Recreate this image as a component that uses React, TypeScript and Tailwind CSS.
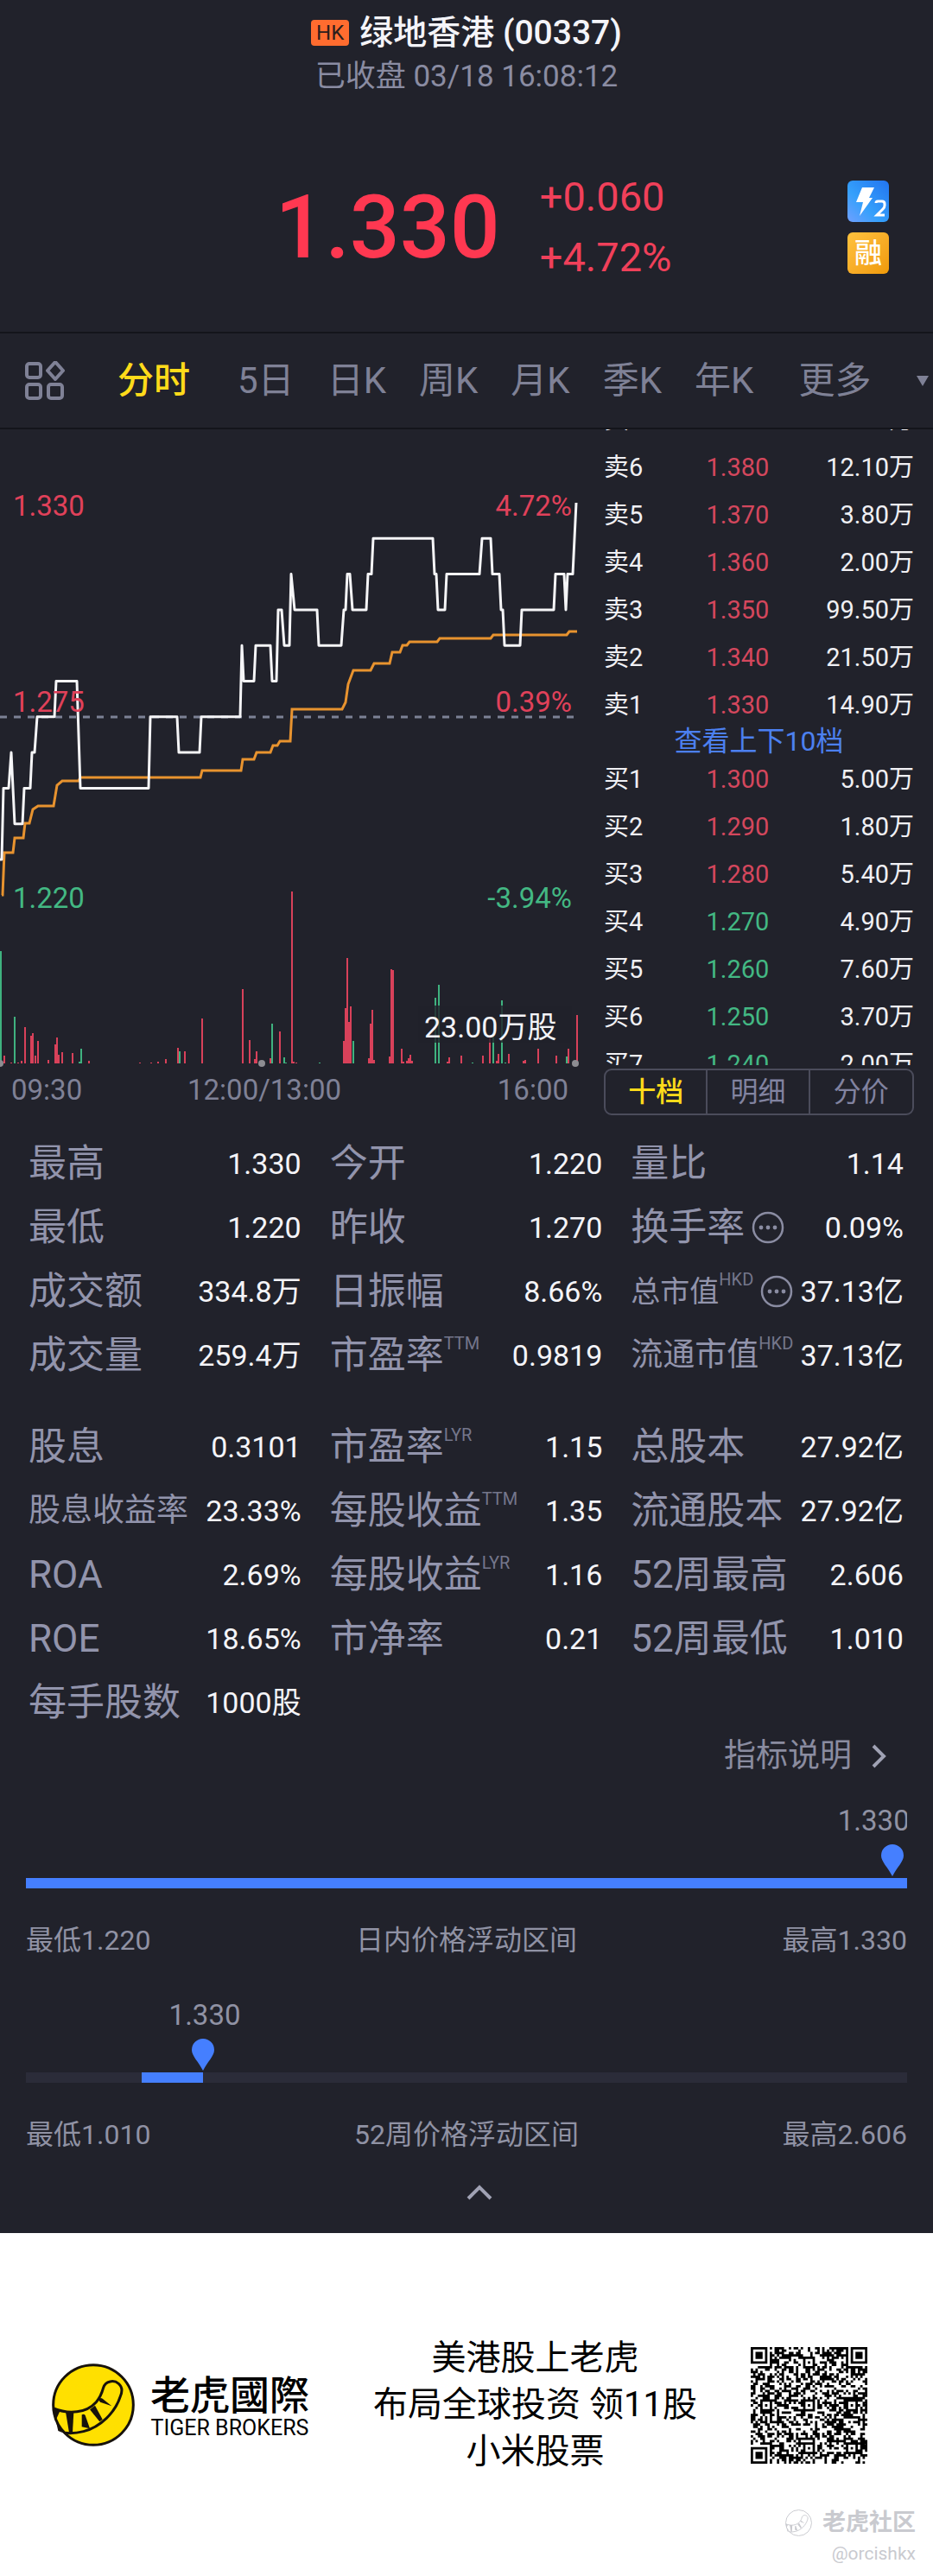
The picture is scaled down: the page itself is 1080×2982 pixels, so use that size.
import type { ReactNode } from 'react';

type Stat = {
  label: string;
  value: string;
  sup?: string;
  info?: boolean;
  size?: string;
};

const periods = [
  { label: '分时', className: 'text-[#ffdb1a] font-medium' },
  { label: '5日', className: 'ml-[55px] text-[#7f8196]' },
  { label: '日K', className: 'ml-[38px] text-[#7f8196]' },
  { label: '周K', className: 'ml-[38px] text-[#7f8196]' },
  { label: '月K', className: 'ml-[38px] text-[#7f8196]' },
  { label: '季K', className: 'ml-[38px] text-[#7f8196]' },
  { label: '年K', className: 'ml-[38px] text-[#7f8196]' },
  { label: '更多', className: 'ml-[52px] text-[#7f8196]' },
];

// [x, price]
const priceLine = [
  [0, 1.23], [2, 1.23], [4, 1.25], [10, 1.25], [13, 1.26], [17, 1.24], [26, 1.24], [28, 1.25],
  [35, 1.25], [37, 1.26], [40, 1.26], [43, 1.27], [63, 1.27], [65, 1.28], [89, 1.28], [93, 1.25],
  [172, 1.25], [174, 1.27], [205, 1.27], [207, 1.26], [231, 1.26], [233, 1.27], [278, 1.27],
  [280, 1.29], [282, 1.28], [294, 1.28], [296, 1.29], [313, 1.29], [315, 1.28], [320, 1.28],
  [322, 1.3], [326, 1.3], [329, 1.29], [335, 1.29], [337, 1.31], [341, 1.3], [367, 1.3],
  [369, 1.29], [395, 1.29], [398, 1.3], [400, 1.3], [402, 1.31], [405, 1.31], [408, 1.3],
  [424, 1.3], [426, 1.31], [430, 1.31], [432, 1.32], [501, 1.32], [503, 1.31], [505, 1.31],
  [507, 1.3], [515, 1.3], [517, 1.31], [555, 1.31], [558, 1.32], [568, 1.32], [570, 1.31],
  [578, 1.31], [580, 1.3], [582, 1.3], [584, 1.29], [602, 1.29], [604, 1.3], [641, 1.3],
  [643, 1.31], [653, 1.31], [655, 1.3], [657, 1.31], [663, 1.31], [665, 1.32], [667, 1.33],
];

// [x, y]
const averageLine = [
  [2, 539], [3, 539], [5, 490], [15, 490], [17, 473], [27, 473], [29, 456], [34, 456], [38, 440],
  [44, 436], [62, 436], [66, 412], [72, 407], [91, 407], [93, 403], [232, 403], [234, 395],
  [279, 395], [281, 382], [294, 382], [297, 374], [313, 374], [316, 366], [321, 366], [324, 361],
  [336, 361], [338, 324], [396, 324], [400, 316], [403, 295], [409, 279], [429, 279], [433, 271],
  [451, 271], [454, 258], [463, 258], [466, 250], [471, 250], [474, 246], [506, 246], [509, 242],
  [568, 242], [571, 238], [656, 238], [659, 234], [668, 234],
];

const riseVolumes = [
  [5, 9], [13, 1], [21, 1], [25, 3], [29, 42], [36, 32], [38, 35], [41, 9], [44, 26], [56, 4],
  [64, 22], [66, 30], [68, 10], [72, 13], [84, 12], [103, 3], [162, 1], [175, 1], [183, 2],
  [192, 5], [206, 18], [214, 14], [234, 52], [281, 86], [289, 27], [295, 5], [297, 14], [313, 6],
  [324, 37], [338, 199], [340, 2], [343, 1], [398, 26], [400, 64], [402, 122], [404, 48],
  [406, 66], [427, 6], [429, 46], [431, 62], [433, 4], [451, 8], [453, 109], [455, 108],
  [465, 17], [467, 2], [471, 3], [473, 6], [475, 10], [477, 3], [518, 2], [520, 7], [534, 9],
  [559, 9], [567, 31], [575, 3], [577, 11], [589, 11], [606, 3], [608, 4], [623, 17], [644, 9],
  [658, 17], [668, 56],
];

const fallVolumes = [
  [1, 130], [17, 54], [92, 2], [94, 17], [208, 14], [315, 46], [329, 7], [331, 1], [370, 1],
  [409, 26], [504, 76], [508, 91], [547, 1], [571, 31], [581, 73], [585, 1], [656, 8],
];

const asks = [
  ['卖7', '1.390', '6.20万'],
  ['卖6', '1.380', '12.10万'],
  ['卖5', '1.370', '3.80万'],
  ['卖4', '1.360', '2.00万'],
  ['卖3', '1.350', '99.50万'],
  ['卖2', '1.340', '21.50万'],
  ['卖1', '1.330', '14.90万'],
];

const bids = [
  ['买1', '1.300', '5.00万'],
  ['买2', '1.290', '1.80万'],
  ['买3', '1.280', '5.40万'],
  ['买4', '1.270', '4.90万'],
  ['买5', '1.260', '7.60万'],
  ['买6', '1.250', '3.70万'],
  ['买7', '1.240', '2.00万'],
];

const tradingStats: Stat[] = [
  { label: '最高', value: '1.330' },
  { label: '今开', value: '1.220' },
  { label: '量比', value: '1.14' },
  { label: '最低', value: '1.220' },
  { label: '昨收', value: '1.270' },
  { label: '换手率', value: '0.09%', info: true },
  { label: '成交额', value: '334.8万' },
  { label: '日振幅', value: '8.66%' },
  { label: '总市值', value: '37.13亿', sup: 'HKD', info: true, size: 'text-[34px]' },
  { label: '成交量', value: '259.4万' },
  { label: '市盈率', value: '0.9819', sup: 'TTM' },
  { label: '流通市值', value: '37.13亿', sup: 'HKD', size: 'text-[37px]' },
];

const companyStats: Stat[] = [
  { label: '股息', value: '0.3101' },
  { label: '市盈率', value: '1.15', sup: 'LYR' },
  { label: '总股本', value: '27.92亿' },
  { label: '股息收益率', value: '23.33%', size: 'text-[37px]' },
  { label: '每股收益', value: '1.35', sup: 'TTM' },
  { label: '流通股本', value: '27.92亿' },
  { label: 'ROA', value: '2.69%' },
  { label: '每股收益', value: '1.16', sup: 'LYR' },
  { label: '52周最高', value: '2.606' },
  { label: 'ROE', value: '18.65%' },
  { label: '市净率', value: '0.21' },
  { label: '52周最低', value: '1.010' },
  { label: '每手股数', value: '1000股' },
];

const ranges = [
  {
    title: '日内价格浮动区间',
    low: '最低1.220',
    high: '最高1.330',
    from: 0,
    to: 100,
    pinAt: 98.3,
    labelAt: 96.2,
  },
  {
    title: '52周价格浮动区间',
    low: '最低1.010',
    high: '最高2.606',
    from: 13.1,
    to: 20.1,
    pinAt: 20.1,
    labelAt: 20.3,
  },
];

function toPoints(points: number[][]) {
  return points.map(([x, y]) => `${x},${y}`).join(' ');
}

function priceToY(price: number) {
  return 85 + (1.33 - price) * 4130;
}

function volumePath(bars: number[][]) {
  return bars.map(([x, height]) => `M${x} 734v${-height}`).join('');
}

const QR_SIZE = 49;

function isFinder(row: number, col: number) {
  const corners = [
    [0, 0],
    [0, QR_SIZE - 7],
    [QR_SIZE - 7, 0],
  ];
  for (const [top, left] of corners) {
    const r = row - top;
    const c = col - left;
    if (r >= -1 && r <= 7 && c >= -1 && c <= 7) {
      const ring = Math.max(Math.abs(r - 3), Math.abs(c - 3));
      return ring === 3 || ring <= 1;
    }
  }
  return null;
}

function isAlignment(row: number, col: number) {
  for (const top of [6, 24, 42]) {
    for (const left of [6, 24, 42]) {
      const ring = Math.max(Math.abs(row - top), Math.abs(col - left));
      if (ring <= 2) return ring !== 1;
    }
  }
  return null;
}

function qrPath() {
  let seed = 20337;
  let path = '';
  for (let row = 0; row < QR_SIZE; row++) {
    for (let col = 0; col < QR_SIZE; col++) {
      seed = (seed * 1103515245 + 12345) % 2147483648;
      const dark = isFinder(row, col) ?? isAlignment(row, col) ?? seed / 2147483648 < 0.5;
      if (dark) path += `M${col} ${row}h1v1h-1z`;
    }
  }
  return path;
}

function Header() {
  return (
    <header className="border-b-2 border-[#14151b] pt-3.5 pb-[71px]">
      <div className="flex items-center justify-center gap-3 leading-[48px]">
        <span className="rounded bg-[#ff6c2f] px-1.5 text-[24px] leading-[30px] text-[#2a1d1c]">
          HK
        </span>
        <h1 className="text-[39px] font-medium text-[#f4f4f8]">绿地香港 (00337)</h1>
      </div>
      <p className="mt-[7px] text-center text-[35px] leading-10 text-[#8a8ca2]">
        已收盘 03/18 16:08:12
      </p>
      <div className="mt-[84px] grid h-[120px] grid-cols-[1fr_auto_1fr] items-center pl-4">
        <span />
        <div className="flex items-center gap-[46px]">
          <strong className="text-[102px] leading-[120px] font-medium text-[#ff3851]">1.330</strong>
          <div className="text-[47px] leading-[70px] text-[#f0405a]">
            <p>+0.060</p>
            <p>+4.72%</p>
          </div>
        </div>
        <div className="mr-[51px] flex flex-col items-end gap-3">
          <LevelTwoBadge />
          <span className="flex size-12 items-center justify-center rounded-md bg-linear-to-br from-[#ffc23d] to-[#f09a05] text-[32px] leading-none font-medium text-white">
            融
          </span>
        </div>
      </div>
    </header>
  );
}

function LevelTwoBadge() {
  return (
    <svg viewBox="0 0 48 48" className="size-12" role="img" aria-label="Level 2">
      <defs>
        <linearGradient id="badge" x1="0" y1="1" x2="1" y2="0">
          <stop offset="0" stopColor="#6fa0ff" />
          <stop offset="0.4" stopColor="#35a0fb" />
          <stop offset="1" stopColor="#2274f0" />
        </linearGradient>
      </defs>
      <rect width="48" height="48" rx="6" fill="url(#badge)" />
      <path d="M17 8h14l-6 12h4L14 41l4-16h-8z" fill="#fff" />
      <path
        d="M33 26q0-2 2-2h5q3 0 3 3v2q0 2-2 4l-7 7h9"
        fill="none"
        stroke="#fff"
        strokeWidth="3"
      />
    </svg>
  );
}

function PeriodTabs() {
  return (
    <nav className="flex h-[111px] items-center border-b-2 border-[#14151b] pl-[29px] text-[42px] leading-[60px]">
      <button type="button" aria-label="布局" className="mr-[61px]">
        <svg
          viewBox="0 0 46 46"
          className="size-[46px]"
          fill="none"
          stroke="#7f8196"
          strokeWidth="4"
          strokeLinejoin="round"
        >
          <rect x="2" y="3" width="16" height="16" rx="3" />
          <rect x="2" y="27" width="16" height="16" rx="3" />
          <rect x="27" y="27" width="16" height="16" rx="3" />
          <path d="M35 1l9 10-9 10-9-10z" />
        </svg>
      </button>
      {periods.map((period) => (
        <button key={period.label} type="button" className={period.className}>
          {period.label}
        </button>
      ))}
      <svg viewBox="0 0 16 14" className="mr-1 ml-auto h-3.5 w-4" fill="#7f8196">
        <path d="M1 1h14L8 13z" />
      </svg>
    </nav>
  );
}

function IntradayChart() {
  return (
    <svg viewBox="0 0 680 800" className="w-full" role="img" aria-label="分时走势">
      <path d="M0 333H668" stroke="#7c8195" strokeWidth="3" strokeDasharray="8 8" />
      <path d={volumePath(riseVolumes)} stroke="#d8415a" strokeWidth="2" />
      <path d={volumePath(fallVolumes)} stroke="#3fb27f" strokeWidth="2" />
      <g fill="#8d8d92">
        <circle cx="0" cy="734" r="4" />
        <circle cx="303" cy="734" r="4" />
        <circle cx="666" cy="734" r="4" />
      </g>
      <polyline points={toPoints(averageLine)} fill="none" stroke="#e8932f" strokeWidth="3" />
      <polyline
        points={toPoints(priceLine.map(([x, price]) => [x, priceToY(price)]))}
        fill="none"
        stroke="#f5f5f7"
        strokeWidth="3"
        strokeLinejoin="round"
      />
      <g fontSize="33" fill="#e0415a">
        <text x="15" y="100">1.330</text>
        <text x="662" y="100" textAnchor="end">4.72%</text>
        <text x="15" y="327">1.275</text>
        <text x="662" y="327" textAnchor="end">0.39%</text>
      </g>
      <g fontSize="33" fill="#43b883">
        <text x="15" y="554">1.220</text>
        <text x="662" y="554" textAnchor="end">-3.94%</text>
      </g>
      <rect x="484" y="667" width="178" height="43" fill="#21222b" fillOpacity="0.8" />
      <text x="491" y="704" fontSize="34" fill="#f4f4f8">23.00万股</text>
      <g fontSize="33" fill="#7f8196">
        <text x="13" y="776">09:30</text>
        <text x="306" y="776" textAnchor="middle">12:00/13:00</text>
        <text x="658" y="776" textAnchor="end">16:00</text>
      </g>
    </svg>
  );
}

function OrderRow({ row }: { row: string[] }) {
  const [side, price, volume] = row;
  return (
    <tr className="h-[55px]">
      <td className="p-0">{side}</td>
      <td className={Number(price) > 1.27 ? 'p-0 text-[#d4475d]' : 'p-0 text-[#43b883]'}>{price}</td>
      <td className="p-0 text-right">{volume}</td>
    </tr>
  );
}

function OrderBook() {
  return (
    <section className="pr-[22px] pl-[19px]">
      <div className="h-[736px] overflow-hidden">
        <table className="-mt-[39px] w-full table-fixed text-[29px] leading-10 text-[#f0f0f4]">
          <colgroup>
            <col className="w-[33%]" />
            <col className="w-[27%]" />
            <col />
          </colgroup>
          <tbody>
            {asks.map((row) => (
              <OrderRow key={row[0]} row={row} />
            ))}
            <tr className="h-[31px]">
              <td colSpan={3} className="p-0 text-center text-[32px] leading-[31px]">
                <a href="#depth" className="text-[#4c80f0]">
                  查看上下10档
                </a>
              </td>
            </tr>
            {bids.map((row) => (
              <OrderRow key={row[0]} row={row} />
            ))}
          </tbody>
        </table>
      </div>
      <div className="mt-1 grid grid-cols-3 divide-x-2 divide-[#4b4c5b] rounded-[9px] border-2 border-[#4b4c5b] text-[32px] leading-[50px] text-[#8183a0]">
        <button type="button" className="font-medium text-[#ffdb1a]">
          十档
        </button>
        <button type="button">明细</button>
        <button type="button">分价</button>
      </div>
    </section>
  );
}

function InfoIcon() {
  return (
    <svg viewBox="0 0 38 38" className="ml-2 size-[38px] shrink-0">
      <circle cx="19" cy="19" r="17" fill="none" stroke="#8a8ca2" strokeWidth="2.5" />
      <g fill="#8a8ca2">
        <circle cx="11" cy="19" r="2.4" />
        <circle cx="19" cy="19" r="2.4" />
        <circle cx="27" cy="19" r="2.4" />
      </g>
    </svg>
  );
}

function StatGrid({ stats }: { stats: Stat[] }) {
  return (
    <dl className="grid grid-cols-3 gap-x-[33px]">
      {stats.map((stat) => (
        <div
          key={stat.label + (stat.sup ?? '')}
          className="flex h-[74px] items-center justify-between whitespace-nowrap"
        >
          <dt className="flex items-center text-[#9294ac]">
            <span className={stat.size ?? 'text-[44px]'}>{stat.label}</span>
            {stat.sup ? (
              <span className="mb-7 text-[20px] leading-6 text-[#74768b]">{stat.sup}</span>
            ) : null}
            {stat.info ? <InfoIcon /> : null}
          </dt>
          <dd className="text-[34px] text-[#f4f4f8]">{stat.value}</dd>
        </div>
      ))}
    </dl>
  );
}

function PriceRange({ range }: { range: (typeof ranges)[number] }) {
  return (
    <section className="px-[30px] text-[#9092a4]">
      <div className="relative h-[84px] overflow-hidden">
        <span
          className="absolute top-0 -translate-x-1/2 text-[33px] leading-9"
          style={{ left: `${range.labelAt}%` }}
        >
          1.330
        </span>
        <svg
          viewBox="0 0 26 37"
          className="absolute top-[45px] h-[37px] w-[26px] -translate-x-1/2"
          style={{ left: `${range.pinAt}%` }}
          fill="#457fff"
        >
          <path d="M13 0a13 13 0 0 1 13 13c0 7-8 14-13 24C8 27 0 20 0 13A13 13 0 0 1 13 0z" />
        </svg>
      </div>
      <div className="h-3 bg-[#2b2c39]">
        <div
          className="h-full bg-[#457fff]"
          style={{ marginLeft: `${range.from}%`, width: `${range.to - range.from}%` }}
        />
      </div>
      <div className="mt-9 flex justify-between text-[32px] leading-[48px]">
        <span>{range.low}</span>
        <span>{range.title}</span>
        <span>{range.high}</span>
      </div>
    </section>
  );
}

function TigerMark({ line, fill, className }: { line: string; fill: string; className: string }) {
  return (
    <svg viewBox="30 30 288 288" className={className}>
      <circle cx="174" cy="174" r="139" fill={fill} stroke={line} strokeWidth="9" />
      <path
        d="M36 186C90 208 150 202 184 164C200 146 204 132 209 114C216 90 246 86 262 100C276 112 274 130 268 144C250 200 200 250 140 266C116 272 94 273 76 271"
        fill="none"
        stroke={line}
        strokeWidth="9"
      />
      <g fill={line}>
        <path d="M34 184l24 12-16 34z" />
        <path d="M78 198h28l-4 72h-12z" />
        <path d="M42 220l24 46 10 8-24-10z" />
        <path d="M134 208q8-4 12 2l16 46-28-6z" />
        <path d="M162 190l18-14 26 48-10 8z" />
        <path d="M192 156q6-10 14-4l32 26-40-14z" />
      </g>
    </svg>
  );
}

function Watermark({ children }: { children: ReactNode }) {
  return (
    <div className="mt-[37px] flex flex-col items-end pr-5 text-[#c9cacf]">
      <div className="flex items-center gap-3">
        <TigerMark line="#c9cacf" fill="#ffffff" className="size-[31px]" />
        <span className="text-[27px] leading-9 font-bold">老虎社区</span>
      </div>
      <span className="text-[21px] leading-9">{children}</span>
    </div>
  );
}

function Footer() {
  return (
    <footer className="bg-white pt-[118px] pb-2 text-black">
      <div className="grid grid-cols-[auto_1fr_auto] items-center pr-[76px] pl-[60px]">
        <div className="flex items-center gap-[18px]">
          <TigerMark line="#17120c" fill="#ffe000" className="size-[96px]" />
          <div className="flex flex-col items-center">
            <strong className="font-['Noto_Sans_CJK_TC',sans-serif] text-[46px] leading-[54px] font-medium">
              老虎國際
            </strong>
            <span className="text-[25px] leading-[30px]">TIGER BROKERS</span>
          </div>
        </div>
        <p className="pl-3 text-center text-[40px] leading-[54px]">
          美港股上老虎
          <br />
          布局全球投资 领11股
          <br />
          小米股票
        </p>
        <svg
          viewBox={`0 0 ${QR_SIZE} ${QR_SIZE}`}
          className="size-[135px]"
          role="img"
          aria-label="二维码"
        >
          <path d={qrPath()} />
        </svg>
      </div>
      <Watermark>@orcishkx</Watermark>
    </footer>
  );
}

export default function App() {
  return (
    <div className="bg-[#21222b] font-['Roboto','Noto_Sans_CJK_SC',sans-serif]">
      <Header />
      <PeriodTabs />
      <main>
        <div className="grid grid-cols-[17fr_10fr]">
          <IntradayChart />
          <OrderBook />
        </div>
        <div className="mt-[13px] flex flex-col gap-8 pr-[34px] pl-[33px]">
          <StatGrid stats={tradingStats} />
          <StatGrid stats={companyStats} />
        </div>
        <a
          href="#glossary"
          className="mr-[54px] flex items-center justify-end gap-[22px] text-[37px] leading-[50px] text-[#8a8ca0]"
        >
          指标说明
          <svg viewBox="0 0 18 28" className="h-7 w-[18px]" fill="none" stroke="#a0a2b4" strokeWidth="4">
            <path d="M3 2l12 12L3 26" />
          </svg>
        </a>
        <div className="mt-8 flex flex-col gap-[45px]">
          {ranges.map((range) => (
            <PriceRange key={range.title} range={range} />
          ))}
        </div>
        <button
          type="button"
          aria-label="收起"
          className="flex h-[90px] w-full items-center justify-center pb-1 pl-[30px]"
        >
          <svg viewBox="0 0 30 18" className="h-[18px] w-[30px]" fill="none" stroke="#a0a2b4" strokeWidth="4">
            <path d="M2 16L15 3l13 13" />
          </svg>
        </button>
      </main>
      <Footer />
    </div>
  );
}
